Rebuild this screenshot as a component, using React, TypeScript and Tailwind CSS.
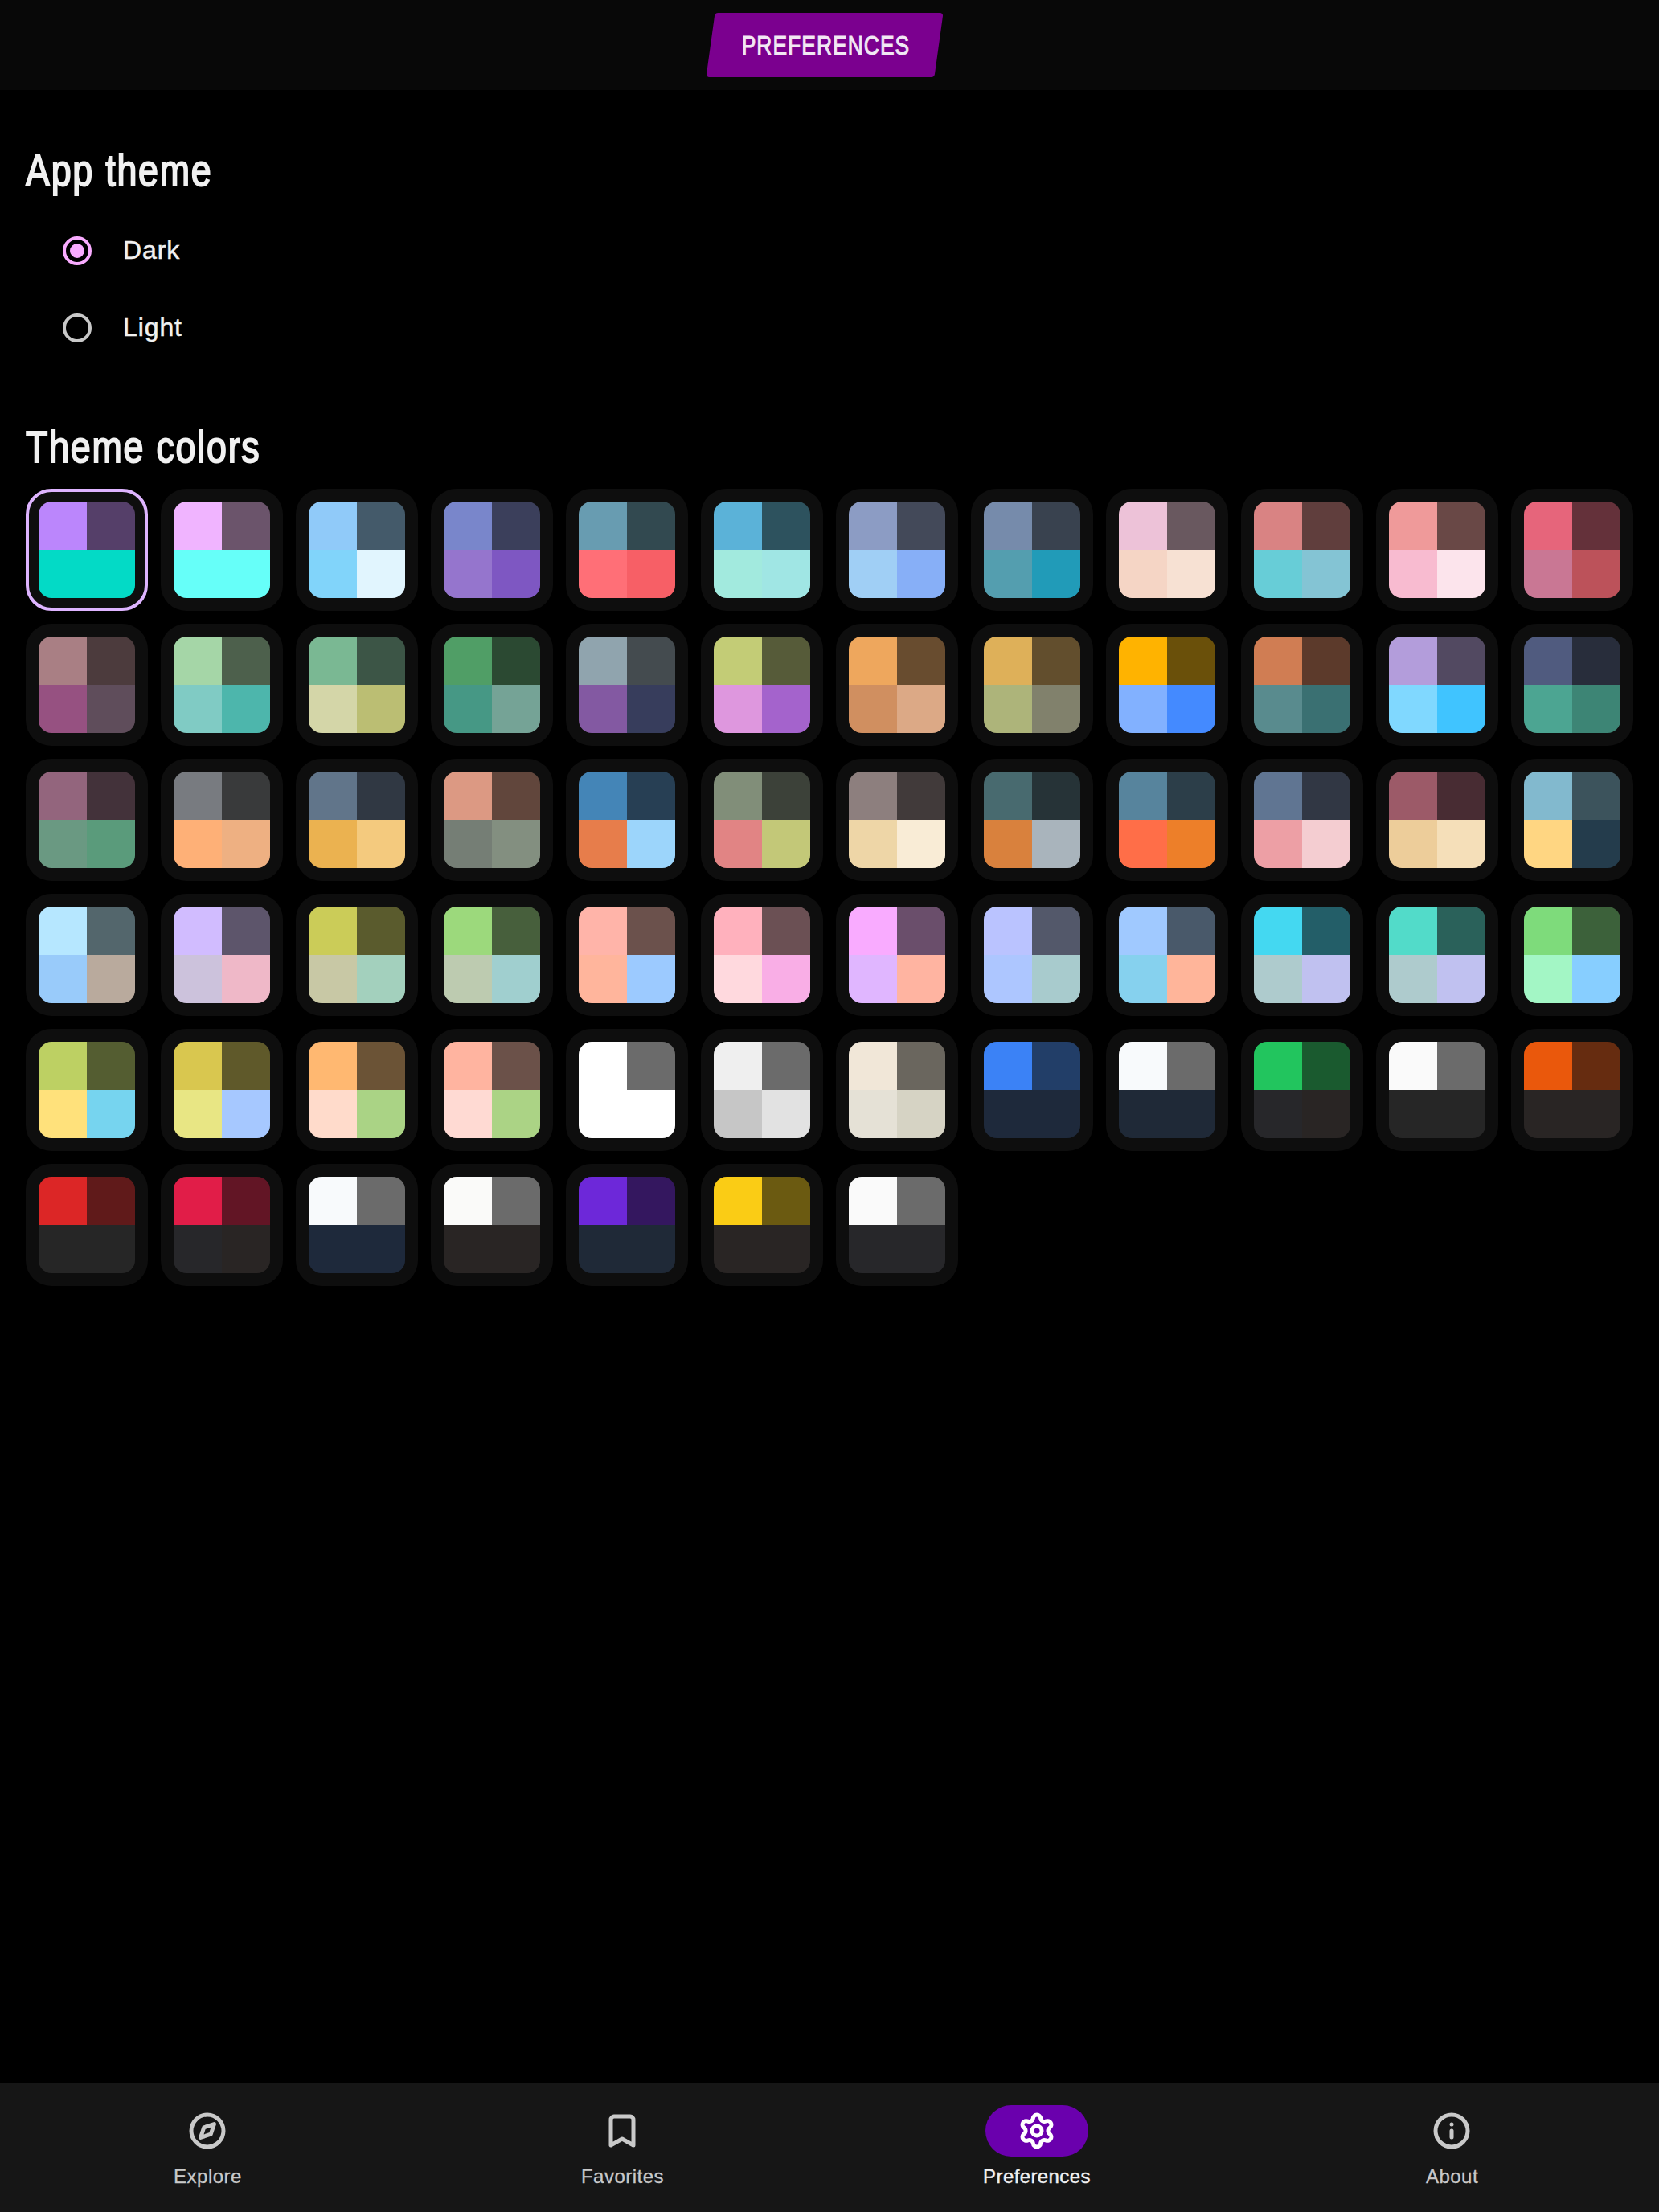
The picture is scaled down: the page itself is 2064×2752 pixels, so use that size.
import { Info, Settings } from 'lucide-react';
import type { ReactNode } from 'react';

// Each theme: primary, muted primary, secondary, tertiary
const THEMES: string[] = [
  'bb86fc 553f69 03dac6 03dac6', 'f0b4ff 6b546b 66fff9 66fff9', '90caf9 445a6a 81d4fa e1f5fe', '7986cb 3b3f5b 9575cd 7e57c2',
  '689cb1 324950 ff6f77 f75f66', '5bb2d8 2d525e a2eade a0e6e4', '8c9cc4 434959 a0cff5 87aff7', '768bab 39424f 549eaf 219bb8',
  'edc2d8 69585f f5d5c5 f7e1d3', 'd98383 603e3d 67cdd7 84c4d4', 'ef9a9a 694846 f8bbd0 fce4ec', 'e6657b 64313a c97794 bc525a',

  'a97f84 4c3b3d 965181 5f4d5b', 'a5d6a7 4d604c 80cbc4 4db6ac', '7ab893 3c5546 d4d6a8 bbbe73', '509e66 2b4932 469885 75a396',
  '90a4ae 444b4f 8359a2 373d5c', 'c3cc76 565b39 de97de a463cc', 'eea75d 684c2f d08f60 dca986', 'deb059 624e2d adb47a 81816c',
  'ffb300 6a500a 82b1ff 448aff', 'd07d53 5c3a2b 598b8e 3a7072', 'b39ddb 524961 80d8ff 40c4ff', '505b7f 282d3b 4ca592 3d8575',

  '93657d 43323a 6a9982 5a9b7b', '787b80 393a3b feb077 eeb082', '61758a 303843 ebb250 f4ca7e', 'dc9983 61463c 757e75 838f80',
  '4485b7 273f54 e77d4b 9cd5fb', '818e79 3c4139 e18484 c3c878', '8d7f7e 413a3a eed6a7 f9ecd6', '486a6f 263337 d9813d a9b4bc',
  '57849d 2c3e49 ff6e48 ed7f29', '607592 313744 ed9fa5 f4cdd1', '9c5a68 482c33 edcd9a f5dfb9', '82b9ce 3c535c ffd682 243c4c',

  'b6e7ff 53666c 99cbfa b9aa9d', 'd1bcff 5d556b ccc2dc efb8c8', 'cbcc58 5a5b2d c8c8a5 a3d0bd', '9cd97c 475f3c bdcbb0 a0cfcf',
  'ffb4a9 6b514c ffb59c 9ccaff', 'ffb1bd 6b5054 ffd9de f9aee6', 'f9abff 6a4e6b e0b6ff ffb4a1', 'bac3ff 53586a adc6ff a8cbcd',
  'a0c9ff 49596a 86d1ee ffb59a', '44d8f1 235e68 aecbcd c0c1f0', '52dbc9 2a615a aecbcd c0c1f0', '7edb7b 3c613a a3f6c5 87ceff',

  'bdd063 545d31 ffe17b 76d4ef', 'd9c74f 5f592a e8e684 a6c8ff', 'ffb871 6b5336 ffdbcb aad385', 'ffb4a0 6b5149 ffdad3 abd385',
  'ffffff 6b6b6b ffffff ffffff', 'efefef 6b6b6b c6c6c6 e2e2e2', 'f1e7d8 6a665e e5e1d6 d6d3c4', '3b82f6 223e68 1e293b 1e293b',
  'f8fafc 6b6b6b 1f2937 1f2937', '22c55e 1a5a2f 27272a 292524', 'fafafa 6b6b6b 262626 262626', 'ea580c 662c10 292524 292524',

  'dc2626 601a1a 262626 262626', 'e11d48 621525 27272a 292524', 'f8fafc 6b6b6b 1e293b 1e293b', 'fafaf9 6b6b6b 292524 292524',
  '6d28d9 34175f 1f2937 1f2937', 'facc15 6b5a11 292524 292524', 'fafafa 6b6b6b 27272a 27272a',
];

function SectionTitle({ children }: { children: ReactNode }) {
  return (
    <h2 className="origin-left scale-x-[0.8] text-[56px] leading-[72px] tracking-[2.2px] text-[#f1f1f1] [-webkit-text-stroke:2px_#f1f1f1]">
      {children}
    </h2>
  );
}

function RadioRow({ label, checked = false }: { label: string; checked?: boolean }) {
  return (
    <div role="radio" aria-checked={checked} className="flex h-24 items-center gap-[38px] pl-[46px]">
      <span
        className={
          checked
            ? 'flex size-9 items-center justify-center rounded-full border-4 border-[#f9abff]'
            : 'flex size-9 items-center justify-center rounded-full border-4 border-[#c8c8c8]'
        }
      >
        {checked && <span className="size-[18px] rounded-full bg-[#f9abff]" />}
      </span>
      <span className="pb-0.5 pl-px text-[32px] leading-10 tracking-[0.9px] text-[#f1f1f1] [-webkit-text-stroke:0.5px_#f1f1f1]">{label}</span>
    </div>
  );
}

function ThemeCard({ theme, selected }: { theme: string; selected: boolean }) {
  return (
    <button
      className={
        selected
          ? 'size-[152px] rounded-[32px] border-4 border-[#deb4ff] bg-[#0e0e0e] p-3'
          : 'size-[152px] rounded-[32px] bg-[#0e0e0e] p-4'
      }
    >
      <div className="grid size-[120px] grid-cols-2 grid-rows-2 overflow-hidden rounded-2xl">
        {theme.split(' ').map((c, i) => (
          <span key={i} style={{ backgroundColor: `#${c}` }} />
        ))}
      </div>
    </button>
  );
}

function StrokeIcon({ children }: { children: ReactNode }) {
  return (
    <svg width="48" height="48" viewBox="0 0 24 24" fill="none" stroke="currentColor" strokeWidth="2.5" strokeLinecap="round" strokeLinejoin="round">
      {children}
    </svg>
  );
}

function NavItem({ label, icon, active = false }: { label: string; icon: ReactNode; active?: boolean }) {
  return (
    <a className={active ? 'flex flex-col items-center pt-[27px] text-white' : 'flex flex-col items-center pt-[27px] text-[#c9c9c9]'}>
      <span
        className={
          active
            ? 'flex h-16 w-32 items-center justify-center rounded-full bg-[#6a00ad]'
            : 'flex h-16 w-32 items-center justify-center rounded-full'
        }
      >
        {icon}
      </span>
      <span
        className={
          active
            ? 'mt-[9px] text-2xl leading-8 tracking-[0.4px] text-[#f1f1f1] [-webkit-text-stroke:0.4px_#f1f1f1]'
            : 'mt-[9px] pl-px text-2xl leading-8 tracking-[0.5px] [-webkit-text-stroke:0.3px_#c9c9c9]'
        }
      >
        {label}
      </span>
    </a>
  );
}

export default function App() {
  return (
    <div className="flex h-[2752px] w-[2064px] flex-col bg-black font-['Liberation_Sans',sans-serif]">
      <header className="flex h-28 shrink-0 items-center justify-center bg-[#080808] pr-[12px]">
        <div className="flex h-20 w-[284px] -skew-x-[7.9deg] items-center justify-center rounded bg-[#7b008f]">
          <span className="skew-x-[7.9deg]">
            <span className="block scale-x-[0.8] pt-px pl-1 text-[33px] leading-10 tracking-[1.3px] whitespace-nowrap text-[#f2e8f4] [-webkit-text-stroke:1px_#f2e8f4]">
              PREFERENCES
            </span>
          </span>
        </div>
      </header>

      <main className="flex-1 px-8 pt-16">
        <SectionTitle>App theme</SectionTitle>
        <div role="radiogroup" className="mt-4">
          <RadioRow label="Dark" checked />
          <RadioRow label="Light" />
        </div>
        <div className="mt-16">
          <SectionTitle>Theme colors</SectionTitle>
        </div>
        <div className="mt-4 grid grid-cols-12 gap-4">
          {THEMES.map((theme, i) => (
            <ThemeCard key={i} theme={theme} selected={i === 0} />
          ))}
        </div>
      </main>

      <nav className="grid h-40 shrink-0 grid-cols-4 bg-[#161616]">
        <NavItem
          label="Explore"
          icon={
            <StrokeIcon>
              <circle cx="12" cy="12" r="10" />
              <polygon points="16.24 7.76 14.12 14.12 7.76 16.24 9.88 9.88 16.24 7.76" />
            </StrokeIcon>
          }
        />
        <NavItem
          label="Favorites"
          icon={
            <StrokeIcon>
              <path d="m19 21-7-4-7 4V5a2 2 0 0 1 2-2h10a2 2 0 0 1 2 2v16z" />
            </StrokeIcon>
          }
        />
        <NavItem label="Preferences" icon={<Settings size={48} strokeWidth={2.5} />} active />
        <NavItem label="About" icon={<Info size={48} strokeWidth={2.5} />} />
      </nav>
    </div>
  );
}
